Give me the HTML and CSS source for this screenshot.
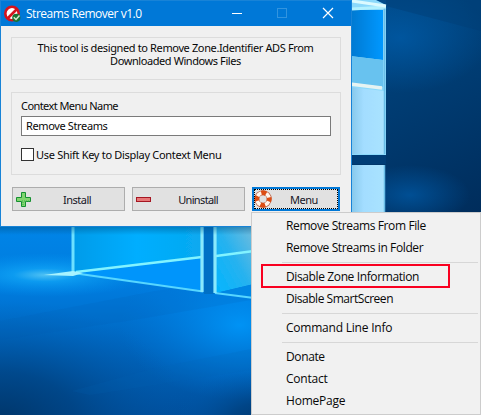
FILE: index.html
```html
<!DOCTYPE html>
<html lang="en">
<head>
<meta charset="utf-8">
<title>Streams Remover v1.0</title>
<link rel="stylesheet" href="styles.css">
</head>
<body>
<main class="desktop">
  <svg class="wallpaper" width="481" height="415" viewBox="0 0 481 415" aria-hidden="true">
    <defs>
      <linearGradient id="right" x1="0" y1="0" x2="1" y2="1"><stop offset="0" stop-color="#004f93"/><stop offset=".45" stop-color="#004580"/><stop offset="1" stop-color="#002b59"/></linearGradient>
      <linearGradient id="floor" x1="0" y1="0" x2="0" y2="1"><stop offset="0" stop-color="#0085e8"/><stop offset=".35" stop-color="#007adc"/><stop offset=".7" stop-color="#0062b9"/><stop offset="1" stop-color="#004f9c"/></linearGradient>
      <radialGradient id="dark"><stop offset="0" stop-color="#003568" stop-opacity=".95"/><stop offset=".4" stop-color="#003e79" stop-opacity=".65"/><stop offset="1" stop-color="#005bae" stop-opacity="0"/></radialGradient>
      <radialGradient id="glow"><stop offset="0" stop-color="#009cff"/><stop offset="1" stop-color="#0080e8" stop-opacity="0"/></radialGradient>
      <radialGradient id="beam"><stop offset="0" stop-color="#7be7ff"/><stop offset=".3" stop-color="#16b4ff" stop-opacity=".85"/><stop offset="1" stop-color="#009cf8" stop-opacity="0"/></radialGradient>
      <radialGradient id="haze"><stop offset="0" stop-color="#0062b4" stop-opacity=".6"/><stop offset="1" stop-color="#0062b4" stop-opacity="0"/></radialGradient>
      <linearGradient id="pane" x1="0" y1="0" x2="1" y2="0"><stop offset="0" stop-color="#009be9"/><stop offset=".5" stop-color="#00aeff"/><stop offset="1" stop-color="#08a9f0"/></linearGradient>
      <linearGradient id="pane2" x1="1" y1="0" x2="0" y2="1"><stop offset="0" stop-color="#79bddb"/><stop offset=".5" stop-color="#27b2ef"/><stop offset="1" stop-color="#00b5ff"/></linearGradient>
      <linearGradient id="top" x1="0" y1="0" x2="1" y2="0"><stop offset="0" stop-color="#0078d0"/><stop offset="1" stop-color="#0098ff"/></linearGradient>
      <linearGradient id="pale" x1="0" y1="0" x2="1" y2="0"><stop offset="0" stop-color="#83c6e9"/><stop offset=".4" stop-color="#a3ddff"/><stop offset="1" stop-color="#a9e3ff"/></linearGradient>
      <linearGradient id="shade" x1="0" y1="0" x2="0" y2="1"><stop offset="0" stop-color="#004f83" stop-opacity=".5"/><stop offset="1" stop-color="#004f83" stop-opacity="0"/></linearGradient>
      <filter id="soft" x="-20%" y="-20%" width="140%" height="140%"><feGaussianBlur stdDeviation=".65"/></filter>
    </defs>
    <rect width="481" height="230" fill="url(#right)"/>
    <ellipse cx="400" cy="38" rx="90" ry="55" fill="url(#haze)"/>
    <ellipse cx="410" cy="195" rx="60" ry="30" fill="url(#haze)"/>
    <path d="M386 6L481 31V0H386z" fill="#003e76" opacity=".45"/>
    <rect y="225" width="260" height="190" fill="url(#floor)"/>
    <ellipse cx="240" cy="325" rx="120" ry="75" fill="url(#glow)" opacity=".8"/>
    <ellipse cx="0" cy="420" rx="190" ry="120" fill="url(#dark)"/>
    <ellipse cx="265" cy="425" rx="90" ry="58" fill="url(#dark)"/>
    <path d="M0 321L155 291L251 277V300L140 319L0 340z" fill="#005dae" opacity=".12"/>
    <path d="M72 391L155 368L251 349V370L90 395z" fill="#0064b6" opacity=".15"/>
    <ellipse cx="45" cy="275" rx="105" ry="22" fill="url(#beam)" opacity=".65"/>
    <g filter="url(#soft)">
      <path d="M73 225H201V257L73 273z" fill="url(#pane)"/>
      <path d="M73 273L201 257V291z" fill="#0095fb"/>
      <path d="M204 225H214V294H204z" fill="#006fc5"/>
      <path d="M216 225H254V284L216 293z" fill="url(#pane2)"/>
      <path d="M216 293L254 284V298z" fill="#0087e4"/>
      <path d="M73 225V273" stroke="#6ce0ff" stroke-width="3"/>
      <path d="M76 272L202 257M216 256L254 251" stroke="#82f3ff" stroke-width="2.6"/>
      <path d="M73 273L203 291.500M215 293L254 298" stroke="#56d6ff" stroke-width="1.800"/>
      <path d="M202 225V292M215 225V293" stroke="#8ae9fc" stroke-width="3.200"/>
      <path d="M44 275L73 271L83 273L73 276z" fill="#a8f3ff"/>
      <path d="M350 0H376L386 5V155H350z" fill="#8bd9fb"/>
      <path d="M350 10L383 10V60L350 56z" fill="url(#top)"/>
      <path d="M350 56L383 60V87L350 83z" fill="#67c2ef"/>
      <path d="M350 87L384 91V154H350zM350 165H384V214H350z" fill="url(#pale)"/>
      <path d="M350 84L382 88" stroke="#e6f3f2" stroke-width="3.500"/>
      <path d="M384.500 8V154M384.500 165V214" stroke="#69bde7" stroke-width="1.500"/>
      <path d="M352 9L386 7" stroke="#b2f1ff" stroke-width="3"/>
      <path d="M352 1L386 6" stroke="#dbfaff" stroke-width="3"/>
    </g>
    <rect y="226" width="251" height="9" fill="url(#shade)"/>
    <rect x="350" y="155" width="36" height="9" fill="#003d76"/>
  </svg>

  <section class="window">
    <header class="titlebar">
      <svg class="app-icon" width="18" height="18" viewBox="0 0 18 18">
        <circle cx="8" cy="8.500" r="6.700" fill="#fff" stroke="#d5131c" stroke-width="2.600"/>
        <path d="M4 13L13 4" stroke="#d5131c" stroke-width="2.600"/>
        <circle cx="12.300" cy="12.800" r="4.100" fill="#197332"/>
        <path d="M9.800 12.300L12 14.500L15.500 10.500" fill="none" stroke="#d2e9cc" stroke-width="1.500"/>
      </svg>
      <h1 class="title">Streams Remover v1.0</h1>
      <svg class="controls" width="104" height="13" viewBox="0 0 104 13" fill="none" shape-rendering="crispEdges">
        <path d="M1 6.500H11" stroke="#fff"/>
        <rect x="46.500" y="1.500" width="9" height="9" stroke="#3294df"/>
        <path d="M92 1L102 11M102 1L92 11" stroke="#fff" stroke-width="1.200" shape-rendering="auto"/>
      </svg>
    </header>
    <div class="content">
      <div class="panel intro"><div class="intro-a">This tool is designed to Remove Zone.Identifier ADS From</div><div class="intro-b">Downloaded Windows Files</div></div>
      <div class="panel options">
        <div class="label">Context Menu Name</div>
        <div class="field"><span>Remove Streams</span></div>
        <div class="check"><i class="box"></i><span class="check-text">Use Shift Key to Display Context Menu</span></div>
      </div>
      <div class="actions">
        <div class="button install">
          <svg width="17" height="17" viewBox="0 0 17 17"><path d="M6.500 1.500H10.500V6.500H15.500V10.500H10.500V15.500H6.500V10.500H1.500V6.500H6.500z" fill="#80d56f" stroke="#169032"/><path d="M7 10H15M8 11V15" stroke="#3fae49" stroke-dasharray="1 1"/></svg>
          <span>Install</span>
        </div>
        <div class="button uninstall">
          <svg width="17" height="17" viewBox="0 0 17 17"><rect x="1.500" y="6.500" width="14" height="4" fill="#e77777" stroke="#a51622"/></svg>
          <span>Uninstall</span>
        </div>
        <div class="button menu-button">
          <svg width="18" height="18" viewBox="0 0 18 18" fill="none"><circle cx="9" cy="9" r="6.200" stroke="#b95a3d" stroke-width="5"/><circle cx="9" cy="9" r="6.200" stroke="#fff5ec" stroke-width="3.600"/><circle cx="9" cy="9" r="6.200" stroke="#dc4c13" stroke-width="4.600" stroke-dasharray="5 4.739" stroke-dashoffset="2.500"/></svg>
          <span>Menu</span>
        </div>
      </div>
    </div>
  </section>

  <nav class="menu">
    <div class="item">Remove Streams From File</div>
    <div class="item">Remove Streams in Folder</div>
    <div class="separator"></div>
    <div class="item marked">Disable Zone Information</div>
    <div class="item tight">Disable SmartScreen</div>
    <div class="separator"></div>
    <div class="item loose">Command Line Info</div>
    <div class="separator"></div>
    <div class="item">Donate</div>
    <div class="item loose">Contact</div>
    <div class="item loose">HomePage</div>
  </nav>
</main>
</body>
</html>
```
FILE: styles.css
```css
*, *::before { box-sizing: border-box; }
body { margin: 0; overflow: hidden; }
.desktop {
  position: relative;
  width: 481px;
  height: 415px;
  overflow: hidden;
  font: 11px/13px "Noto Sans", sans-serif;
  color: #080808;
  white-space: nowrap;
}
.wallpaper { position: absolute; top: 0; left: 0; }
.window {
  position: relative;
  width: 352px;
  height: 227px;
  border: 1px solid #1883d7;
  background: #f0f0f0;
}
.titlebar {
  display: flex;
  align-items: center;
  height: 25px;
  padding-left: 3px;
  background: #0078d7;
  color: #fff;
}
.app-icon { flex: none; }
.title {
  width: 205px;
  margin: 0 0 0 4px;
  font: 12px/20px "Open Sans", sans-serif;
  letter-spacing: -.48px;
}
.controls { flex: none; }
.content { padding: 11px 10px 0; }
.panel { border: 1px solid #dcdcdc; }
.intro { height: 43px; padding: 3px 1px 0 0; text-align: center; }
.intro-a { letter-spacing: -.37px; }
.intro-b { letter-spacing: -.42px; }
.options { height: 83px; margin-top: 12px; padding: 6px 9px 0; }
.label { height: 17px; letter-spacing: -.57px; }
.field {
  height: 20px;
  padding: 2px 4px;
  border: 1px solid #7a7a7a;
  background: #fff;
  letter-spacing: -.37px;
}
.check { display: flex; align-items: center; gap: 2px; margin-top: 12px; height: 13px; }
.check-text { letter-spacing: -.3px; }
.box { width: 13px; height: 13px; border: 1px solid #333; background: #fff; }
.actions { display: flex; gap: 7px; margin: 12px 0 0 1px; }
.button {
  display: flex;
  align-items: center;
  width: 113px;
  height: 24px;
  padding-left: 2px;
  border: 1px solid #adadad;
  background: #e1e1e1;
}
.button svg { flex: none; }
.button span { flex: 1; padding-right: 2px; text-align: center; color: #151526; letter-spacing: -.5px; }
.button.uninstall span { padding-right: 0; letter-spacing: -.65px; }
.menu-button { width: 88px; padding: 0; border: 2px solid #0078d7; outline: 1px dotted #000; outline-offset: -3px; }
.menu {
  position: absolute;
  left: 251px;
  top: 212px;
  width: 230px;
  height: 203px;
  padding: 2px;
  border: 1px solid #ccc;
  background: #f1f1f1;
  font: 12px/22px "Open Sans", sans-serif;
  letter-spacing: -.38px;
}
.item { height: 22px; padding-left: 32px; }
.tight { letter-spacing: -.47px; }
.loose { letter-spacing: -.22px; }
.separator { height: 7px; margin-left: 28px; padding-top: 3px; }
.separator::before { content: ""; display: block; height: 1px; background: #d7d7d7; }
.marked { position: relative; }
.marked::before {
  content: "";
  position: absolute;
  left: 7px;
  top: -2px;
  width: 189px;
  height: 24px;
  border: 2px solid #f90020;
}
```
